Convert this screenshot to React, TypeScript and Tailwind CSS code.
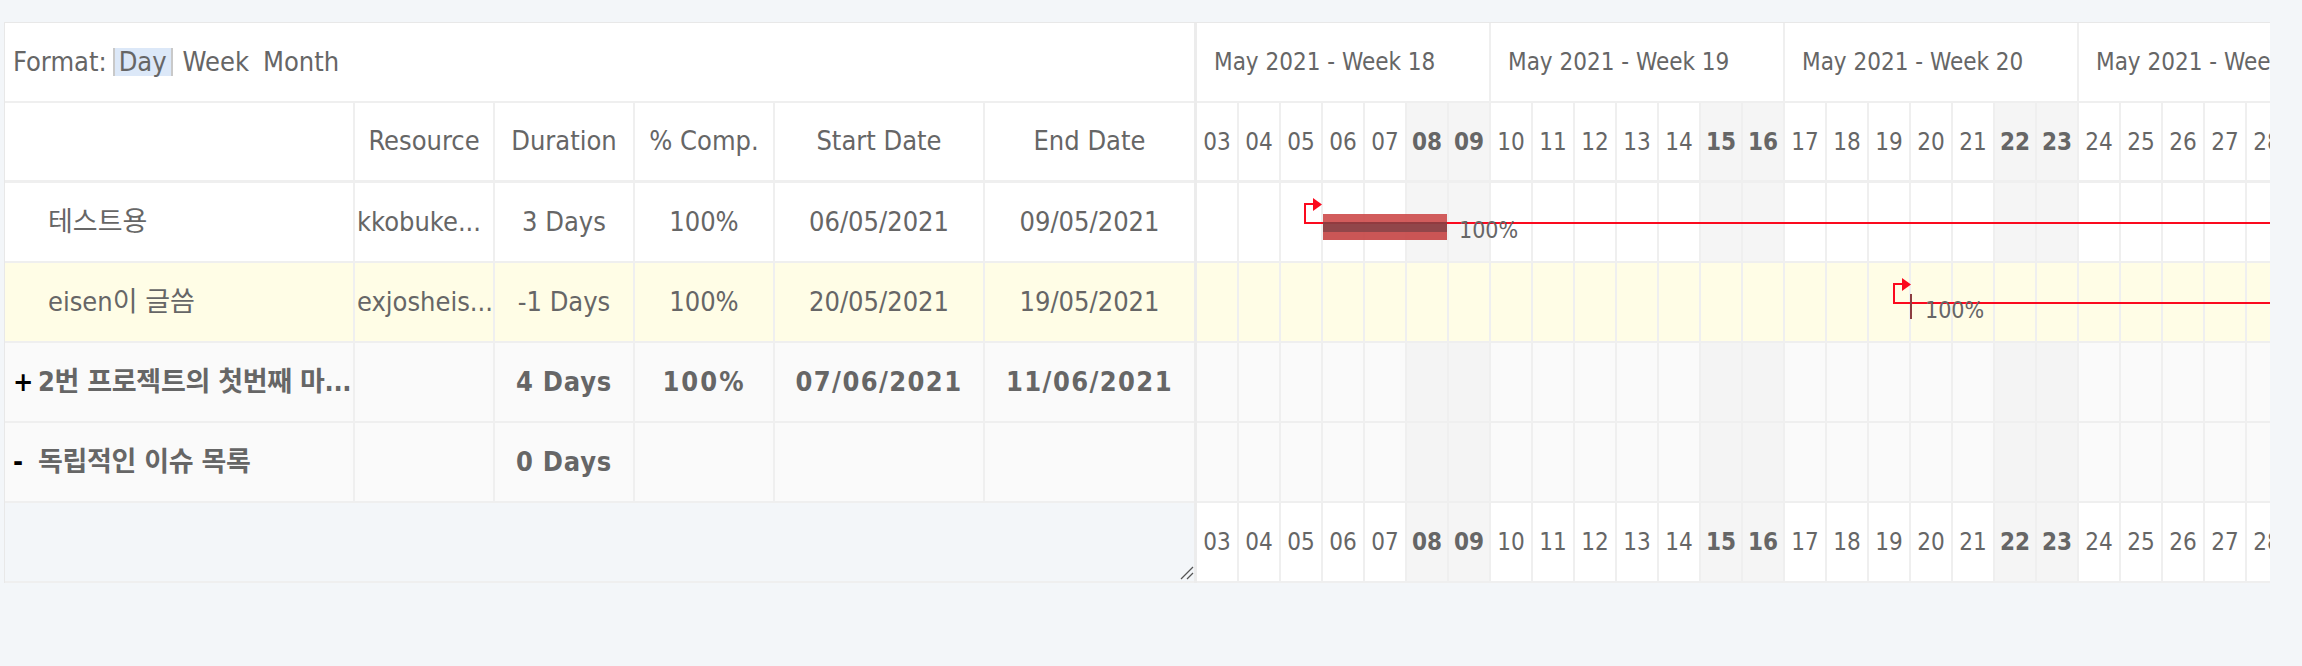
import React from 'react';

type Row = {
  name: string;
  res: string;
  dur: string;
  pct: string;
  start: string;
  end: string;
  group?: string;
  bg: string;
  wk: string;
};

const rows: Row[] = [
  { name: '테스트용', res: 'kkobuke...', dur: '3 Days', pct: '100%', start: '06/05/2021', end: '09/05/2021', bg: 'bg-white', wk: 'bg-[#f5f5f5]' },
  { name: 'eisen이 글씀', res: 'exjosheis...', dur: '-1 Days', pct: '100%', start: '20/05/2021', end: '19/05/2021', bg: 'bg-[#fffde6]', wk: 'bg-[#fffde6]' },
  { name: '2번 프로젝트의 첫번째 마...', res: '', dur: '4 Days', pct: '100%', start: '07/06/2021', end: '11/06/2021', group: '+', bg: 'bg-[#fafafa]', wk: 'bg-[#f4f4f4]' },
  { name: '독립적인 이슈 목록', res: '', dur: '0 Days', pct: '', start: '', end: '', group: '-', bg: 'bg-[#fafafa]', wk: 'bg-[#f4f4f4]' },
];

const days = Array.from({ length: 29 }, (_, i) => i + 3);
const isWeekend = (d: number) => [8, 9, 15, 16, 22, 23, 29, 30].includes(d);
const weeks = [18, 19, 20, 21];

const cell = 'h-full flex items-center justify-center border-r-2 border-[#efefef] shrink-0';

const DayRow = ({ bottom }: { bottom?: boolean }) => (
  <div className={`flex h-[80px] bg-white text-[24px] ${bottom ? 'border-b-2' : 'border-b-[3px]'} border-[#efefef]`}>
    {days.map((d) => (
      <div key={d} className={`w-[42px] ${cell} ${isWeekend(d) ? 'bg-[#f5f5f5] font-bold' : ''}`}>
        {String(d).padStart(2, '0')}
      </div>
    ))}
  </div>
);

const App: React.FC = () => (
  <div className="min-h-screen bg-[#f3f6f9] pt-[22px] pl-[4px] text-[#666] font-['DejaVu_Sans_Condensed','Liberation_Sans','Noto_Sans_CJK_KR',sans-serif]">
    <div className="flex w-max border-l border-t border-[#e8e8e8]">
      {/* task list */}
      <div className="w-[1189px] flex flex-col text-[27px]">
        <div className="h-[80px] bg-white border-b-2 border-[#efefef] flex items-center pl-[8px]">
          <span>Format:</span>
          <span className="ml-[6px] px-[4px] h-[28px] flex items-center bg-[#dce8f8] border-x-2 border-[#c9c9c9]">Day</span>
          <span className="ml-[10px]">Week</span>
          <span className="ml-[14px]">Month</span>
        </div>
        <div className="h-[80px] bg-white border-b-[3px] border-[#efefef] flex">
          <div className={`w-[350px] ${cell}`} />
          <div className={`w-[140px] ${cell}`}>Resource</div>
          <div className={`w-[140px] ${cell}`}>Duration</div>
          <div className={`w-[140px] ${cell}`}>% Comp.</div>
          <div className={`w-[210px] ${cell}`}>Start Date</div>
          <div className="w-[209px] h-full flex items-center justify-center">End Date</div>
        </div>
        {rows.map((r) => (
          <div key={r.name} className={`h-[80px] border-b-2 border-[#efefef] flex ${r.bg} ${r.group ? 'font-bold' : ''}`}>
            <div className={`w-[350px] ${cell} !justify-start whitespace-nowrap overflow-hidden ${r.group ? 'pl-[8px]' : 'pl-[43px]'}`}>
              {r.group && <span className="shrink-0 text-black w-[25px]">{r.group}</span>}
              <span className={`min-w-0 ${r.group ? 'tracking-[-0.3px]' : ''}`}>{r.name}</span>
            </div>
            <div className={`w-[140px] ${cell} !justify-start pl-[2px] whitespace-nowrap overflow-hidden`}>{r.res}</div>
            <div className={`w-[140px] ${cell} ${r.group ? 'tracking-[0.8px]' : ''}`}>{r.dur}</div>
            <div className={`w-[140px] ${cell} ${r.group ? 'tracking-[2px]' : ''}`}>{r.pct}</div>
            <div className={`w-[210px] ${cell} ${r.group ? 'tracking-[1.4px]' : ''}`}>{r.start}</div>
            <div className={`w-[209px] h-full flex items-center justify-center ${r.group ? 'tracking-[1.4px]' : ''}`}>{r.end}</div>
          </div>
        ))}
        <div className="h-[80px] border-b-2 border-[#efefef] bg-[#f3f6f9] flex items-end justify-end">
          <svg width="14" height="14" viewBox="0 0 14 14" className="mb-[1px]">
            <line x1="1" y1="13" x2="13" y2="1" stroke="#555" strokeWidth="1.2" />
            <line x1="7" y1="13" x2="13" y2="7" stroke="#555" strokeWidth="1.2" />
          </svg>
        </div>
      </div>

      {/* divider */}
      <div className="w-[3px] bg-[#ececec]" />

      {/* chart */}
      <div className="w-[1073px] overflow-hidden">
        <div className="w-[1218px] flex flex-col">
          <div className="flex h-[80px] bg-white border-b-2 border-[#efefef] text-[24px]">
            {weeks.map((w) => (
              <div key={w} className={`w-[294px] ${cell} !justify-start pl-[17px] whitespace-nowrap`}>
                May 2021 - Week {w}
              </div>
            ))}
            <div className={`w-[42px] ${cell}`} />
          </div>
          <DayRow />
          <div className="relative">
            {rows.map((r) => (
              <div key={r.name} className={`flex h-[80px] border-b-2 border-[#efefef] ${r.bg}`}>
                {days.map((d) => (
                  <div key={d} className={`w-[42px] ${cell} ${isWeekend(d) ? r.wk : ''}`} />
                ))}
              </div>
            ))}
            {/* dependency lines */}
            <svg className="absolute left-0 top-0 pointer-events-none" width="1218" height="320">
              <path d="M1218 40 H108 V21 H117" fill="none" stroke="#fb0a1e" strokeWidth="2" />
              <path d="M116 15 L125 21.5 L116 28 Z" fill="#fb0a1e" />
              <path d="M1218 120 H697 V101 H706" fill="none" stroke="#fb0a1e" strokeWidth="2" />
              <path d="M705 95 L714 101.5 L705 108 Z" fill="#fb0a1e" />
            </svg>
            {/* task 1 bar */}
            <div className="absolute left-[126px] top-[31px] w-[124px] h-[26px] bg-[#d05454] opacity-95">
              <div className="absolute left-0 right-0 top-[8px] h-[10px] bg-[#8c3d41]" />
              <div className="absolute left-0 right-0 bottom-0 h-[8px] bg-[#c84d4d]" />
            </div>
            <div className="absolute left-[262px] top-[31px] h-[32px] flex items-center text-[23px]">100%</div>
            {/* task 2 marker */}
            <div className="absolute left-[713px] top-[111px] w-[2px] h-[25px] bg-[#8c3d41]" />
            <div className="absolute left-[728px] top-[111px] h-[32px] flex items-center text-[23px]">100%</div>
          </div>
          <DayRow bottom />
        </div>
      </div>
    </div>
  </div>
);

export default App;
